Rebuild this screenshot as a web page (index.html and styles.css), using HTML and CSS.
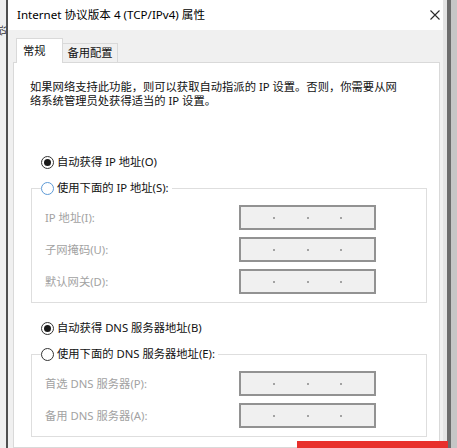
FILE: index.html
```html
<!DOCTYPE html>
<html lang="zh-CN">
<head>
<meta charset="utf-8">
<title>Internet 协议版本 4 (TCP/IPv4) 属性</title>
<link rel="stylesheet" href="styles.css">
</head>
<body>
<div class="screen">
  <div class="bg-left"><span class="bg-glyph">设</span></div>
  <div class="edge-left"></div>
  <div class="dialog">
    <div class="titlebar">
      <span class="title">Internet 协议版本 4 (TCP/IPv4) 属性</span>
      <svg class="close" width="10" height="10" viewBox="0 0 10 10"><path d="M0.5 0.5 L9.5 9.5 M9.5 0.5 L0.5 9.5" stroke="#2b2b2b" stroke-width="1.1" fill="none"/></svg>
    </div>
    <div class="body">
      <div class="tabs">
        <div class="tab active">常规</div>
        <div class="tab">备用配置</div>
      </div>
      <div class="panel">
        <p class="intro">如果网络支持此功能，则可以获取自动指派的 IP 设置。否则，你需要从网<br>络系统管理员处获得适当的 IP 设置。</p>

        <div class="radio first"><span class="dot checked"></span><span>自动获得 IP 地址(O)</span></div>
        <fieldset class="group">
          <legend><div class="radio"><span class="dot focus"></span><span>使用下面的 IP 地址(S):</span></div></legend>
          <div class="field-row"><span class="label">IP 地址(I):</span><div class="ipbox"><i></i><i></i><i></i></div></div>
          <div class="field-row"><span class="label">子网掩码(U):</span><div class="ipbox"><i></i><i></i><i></i></div></div>
          <div class="field-row"><span class="label">默认网关(D):</span><div class="ipbox"><i></i><i></i><i></i></div></div>
        </fieldset>

        <div class="radio second"><span class="dot checked"></span><span>自动获得 DNS 服务器地址(B)</span></div>
        <fieldset class="group">
          <legend><div class="radio"><span class="dot"></span><span>使用下面的 DNS 服务器地址(E):</span></div></legend>
          <div class="field-row"><span class="label">首选 DNS 服务器(P):</span><div class="ipbox"><i></i><i></i><i></i></div></div>
          <div class="field-row"><span class="label">备用 DNS 服务器(A):</span><div class="ipbox"><i></i><i></i><i></i></div></div>
        </fieldset>
      </div>
    </div>
  </div>
  <div class="edge-right-light"></div>
  <div class="edge-right-dark"></div>
  <div class="bg-right"></div>
  <div class="highlight"></div>
</div>
</body>
</html>
```
FILE: styles.css
```css
* { box-sizing: border-box; }
html, body { margin: 0; padding: 0; }
body {
  font-family: "Noto Sans", "Noto Sans CJK SC", sans-serif;
  font-size: 11.3px;
  color: #111;
  background: #d0d0d0;
}
.screen {
  position: relative;
  display: flex;
  width: 457px;
  height: 448px;
  overflow: hidden;
}
.bg-left {
  width: 6px;
  background: #efefef;
  overflow: hidden;
  padding-top: 25px;
}
.bg-glyph {
  display: block;
  width: 12px;
  margin-left: -6px;
  font-size: 11px;
  line-height: 12px;
  color: #333;
  transform: rotate(90deg);
}
.edge-left { width: 2px; background: #4f4f4f; }
.edge-right-light { width: 4px; background: #e4e4e4; }
.edge-right-dark { width: 4px; background: #6c6c6c; }
.bg-right { width: 6px; background: #c6c6c6; }

.dialog {
  width: 435px;
  display: flex;
  flex-direction: column;
  background: #f0f0f0;
}
.titlebar {
  height: 30px;
  background: #fff;
  display: flex;
  align-items: center;
  justify-content: space-between;
  padding: 0 3px 0 9px;
}
.title { font-size: 11.6px; color: #000; line-height: 14px; }
.close { display: block; }

.body {
  flex: 1;
  display: flex;
  flex-direction: column;
  padding: 8px 3px 0 5px;
}
.tabs {
  display: flex;
  align-items: flex-end;
  height: 24px;
  margin-left: 3px;
}
.tab {
  height: 19px;
  width: 55px;
  border: 1px solid #d9d9d9;
  border-bottom: none;
  border-left: none;
  background: #f0f0f0;
  display: flex;
  align-items: center;
  justify-content: center;
  font-size: 11.3px;
  line-height: 14px;
}
.tab.active {
  height: 25px;
  width: 47px;
  margin-bottom: -1px;
  border-left: 1px solid #d9d9d9;
  background: #fff;
  justify-content: flex-start;
  padding-left: 6px;
  position: relative;
  z-index: 1;
}
.panel {
  flex: 1;
  background: #fff;
  border: 1px solid #d9d9d9;
  padding: 17px 0 0 16px;
}
.intro {
  margin: 0;
  line-height: 14px;
  font-size: 11.3px;
}
.radio {
  display: flex;
  align-items: center;
  gap: 3px;
  height: 20px;
  line-height: 14px;
}
.radio.first { margin: 44px 0 0 11px; }
.radio.second { margin: 15px 0 0 11px; }
.dot {
  width: 13px;
  height: 13px;
  border-radius: 50%;
  border: 1px solid #333;
  background: #fff;
  display: grid;
  place-items: center;
  flex: none;
}
.dot.checked::after {
  content: "";
  width: 7px;
  height: 7px;
  border-radius: 50%;
  background: #1a1a1a;
}
.dot.focus { border-color: #5d9ad6; }

.group {
  margin: 6px 0 0 1px;
  width: 396px;
  min-inline-size: 0;
  border: 1px solid #dedede;
  padding: 7px 0 8px 0;
  display: flex;
  flex-direction: column;
  gap: 7px;
}
.group legend {
  margin-left: 9px;
  padding: 0 3px 0 0;
}
.field-row {
  display: grid;
  grid-template-columns: 194px 137px;
  align-items: center;
  height: 25px;
  padding-left: 13px;
}
.label { color: #a2a2a2; line-height: 14px; }
.ipbox {
  height: 25px;
  border: 2px solid #929292;
  background: #f0f0f0;
  display: flex;
  align-items: center;
  justify-content: space-evenly;
}
.ipbox i {
  width: 2px;
  height: 2px;
  border-radius: 50%;
  background: #8a8a8a;
  display: block;
}
.highlight {
  position: absolute;
  left: 297px;
  top: 441px;
  width: 151px;
  height: 10px;
  background: #e8302c;
}
```
